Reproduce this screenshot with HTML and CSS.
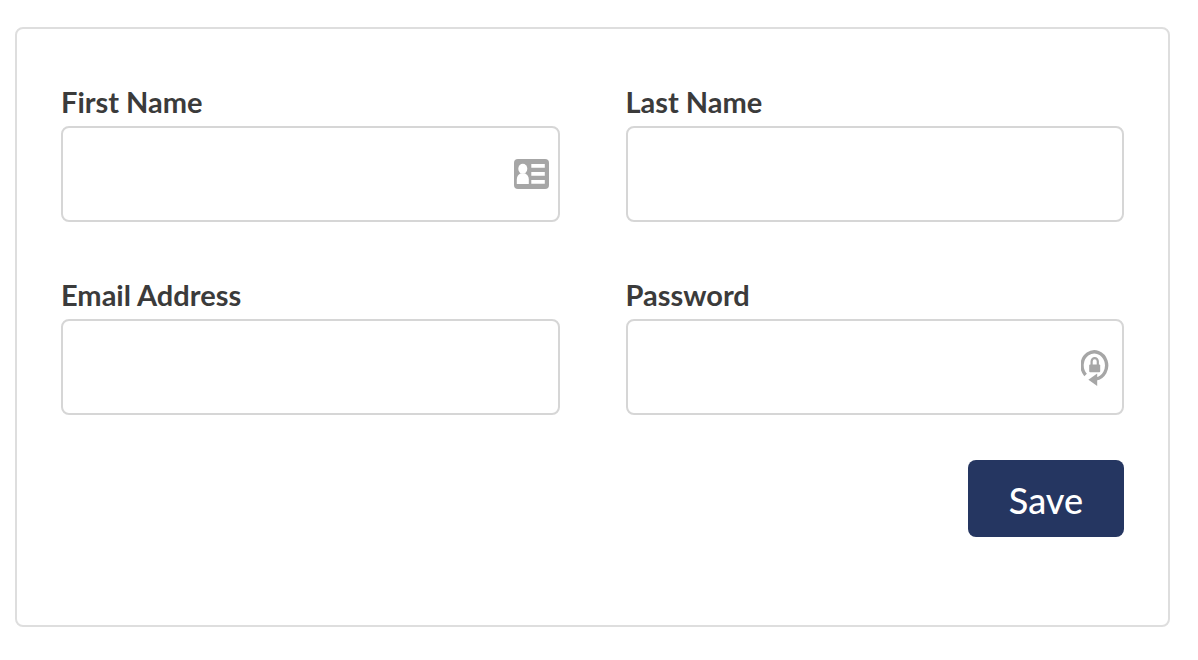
FILE: index.html
```html
<!DOCTYPE html>
<html lang="en">
<head>
  <meta charset="UTF-8">
  <meta name="viewport" content="width=device-width, initial-scale=1.0">
  <title>Account Details</title>
  <link rel="stylesheet" href="styles.css">
</head>
<body>
  <form class="card">
    <div class="form-grid">
      <div class="form-group">
        <label for="first-name">First Name</label>
        <div class="input-wrap">
          <input type="text" id="first-name" />
          <svg class="field-icon icon-contact" viewBox="0 0 35 30" aria-hidden="true">
            <rect width="35" height="30" rx="4" fill="#a6a6a6" />
            <ellipse cx="8.8" cy="9.8" rx="4.5" ry="5" fill="#fff" />
            <path d="M2.8 25V20.5C2.8 17.5 4.2 15.6 6.6 14.2H11C13.4 15.6 14.8 17.5 14.8 20.5V25Z" fill="#fff" />
            <path d="M17.3 5H30.8V8.8H17.3ZM17.3 13H30.8V16.8H17.3ZM17.3 21H30.8V24.8H17.3Z" fill="#fff" />
          </svg>
        </div>
      </div>
      <div class="form-group">
        <label for="last-name">Last Name</label>
        <div class="input-wrap">
          <input type="text" id="last-name" />
        </div>
      </div>
      <div class="form-group">
        <label for="email">Email Address</label>
        <div class="input-wrap">
          <input type="email" id="email" />
        </div>
      </div>
      <div class="form-group">
        <label for="password">Password</label>
        <div class="input-wrap">
          <input type="password" id="password" />
          <svg class="field-icon icon-password" viewBox="0 -2 28 38" aria-hidden="true">
            <path d="M4.6 25A12.3 13.6 0 1 1 15 28.9" fill="none" stroke="#a6a6a6" stroke-width="3.4" />
            <path d="M7.4 29.8L16.2 23.6V36Z" fill="#a6a6a6" />
            <rect x="8.2" y="14.4" width="11" height="7.8" rx="1" fill="#a6a6a6" />
            <path d="M10.6 15V11.4A3.1 3.2 0 0 1 16.8 11.4V15" fill="none" stroke="#a6a6a6" stroke-width="2.2" />
          </svg>
        </div>
      </div>
    </div>
    <div class="actions">
      <button type="submit">Save</button>
    </div>
  </form>
</body>
</html>
```

FILE: styles.css
```css
* {
  box-sizing: border-box;
}

body {
  margin: 0;
  padding: 27px 28px 32px 15px;
  background: #fff;
  color: #3b3b3b;
  font-family: Lato, sans-serif;
}

.card {
  padding: 56px 44px 88px;
  border: 2px solid #dedede;
  border-radius: 8px;
}

.form-grid {
  display: grid;
  grid-template-columns: 1fr 1fr;
  gap: 56px 66px;
}

.form-group label {
  display: block;
  margin-bottom: 7px;
  font-size: 29px;
  line-height: 34px;
  font-weight: bold;
}

.input-wrap {
  position: relative;
}

.input-wrap input {
  display: block;
  width: 100%;
  height: 96px;
  padding: 0 56px 0 20px;
  background: #fff;
  border: 2px solid #d6d6d6;
  border-radius: 8px;
  color: inherit;
  font: inherit;
  font-size: 29px;
}

/* icons sit inside the right edge of the field */
.field-icon {
  position: absolute;
  top: 0;
  bottom: 0;
  margin: auto 0;
}

.icon-contact {
  right: 11px;
  width: 35px;
  height: 30px;
}

.icon-password {
  right: 15px;
  width: 28px;
  height: 38px;
}

.actions {
  display: flex;
  justify-content: flex-end;
  margin-top: 45px;
}

.actions button {
  padding: 18px 41px 15px;
  background: #253661;
  border: none;
  border-radius: 8px;
  color: #fff;
  font-family: inherit;
  font-size: 36px;
  font-weight: 500;
  line-height: 44px;
  cursor: pointer;
}

.actions button:hover {
  background: #1c2a4d;
}
```
